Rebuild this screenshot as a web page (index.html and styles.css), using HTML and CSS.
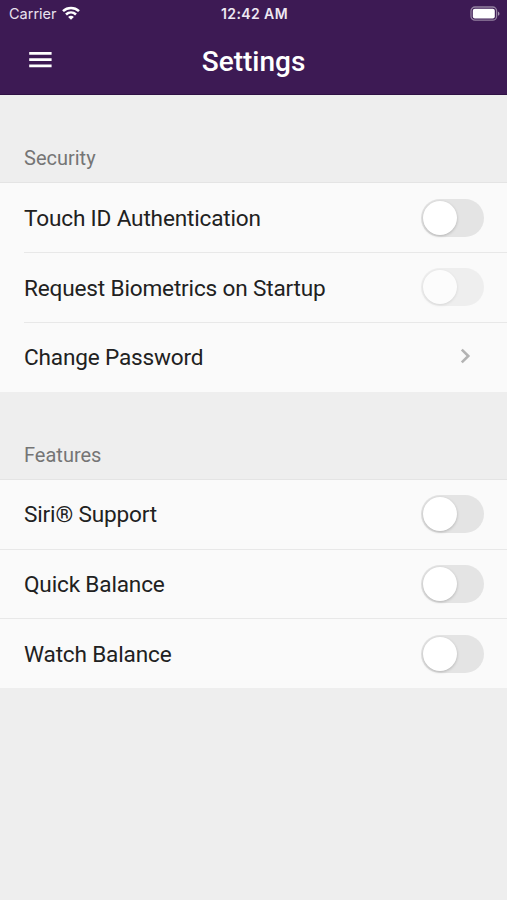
FILE: index.html
```html
<!DOCTYPE html>
<html lang="en">
<head>
<meta charset="utf-8">
<title>Settings</title>
<link rel="stylesheet" href="styles.css">
</head>
<body>
<header class="header">
  <div class="status">
    <div class="carrier"><span>Carrier</span>
      <svg class="wifi" width="18" height="14" viewBox="0 0 18 14" fill="none" stroke="#fff" stroke-width="2.6"><path d="M1 5.1C5.6.9 12.4.9 17 5.1M4 8.5c2.9-2.7 7.1-2.7 10 0"/><path d="M6.1 10.9c1.7-1.6 4.1-1.6 5.8 0L9 13.8z" fill="#fff" stroke="none"/></svg>
    </div>
    <span class="time">12:42 AM</span>
    <svg class="battery" width="30" height="16" viewBox="0 0 30 16"><rect x="1" y="1" width="25.6" height="13.2" rx="4" fill="none" stroke="#fff" stroke-opacity=".45" stroke-width="1.3"/><rect x="2.8" y="2.8" width="22" height="9.6" rx="2" fill="#fff"/><path d="M28 5.4c2 .8 2 3.6 0 4.4z" fill="#fff" fill-opacity=".55"/></svg>
  </div>
  <div class="toolbar">
    <svg class="menu" width="24" height="18" viewBox="0 0 24 18" fill="#fff"><path d="M1.2 1h22.4v2.8H1.2zM1.2 7.2h22.4V10H1.2zM1.2 13.4h22.4v2.8H1.2z"/></svg>
    <h1 class="title">Settings</h1>
  </div>
</header>
<main>
  <h2 class="section">Security</h2>
  <ul class="list inset">
    <li class="row"><span class="label">Touch ID Authentication</span><span class="switch"><span class="knob"></span></span></li>
    <li class="row"><span class="label">Request Biometrics on Startup</span><span class="switch disabled"><span class="knob"></span></span></li>
    <li class="row"><span class="label">Change Password</span><svg class="chevron" width="11" height="16" viewBox="0 0 11 16" fill="none" stroke="#b3b3b3" stroke-width="2.6"><path d="M1.8 1.6 8.3 8l-6.5 6.4"/></svg></li>
  </ul>
  <h2 class="section">Features</h2>
  <ul class="list">
    <li class="row"><span class="label">Siri® Support</span><span class="switch"><span class="knob"></span></span></li>
    <li class="row"><span class="label">Quick Balance</span><span class="switch"><span class="knob"></span></span></li>
    <li class="row"><span class="label">Watch Balance</span><span class="switch"><span class="knob"></span></span></li>
  </ul>
</main>
</body>
</html>
```
FILE: styles.css
```css
* { box-sizing: border-box; }
body {
  margin: 0;
  min-height: 900px;
  background: #eee;
  font-family: Roboto, "Liberation Sans", sans-serif;
  color: #212121;
}
.header {
  height: 95px;
  background: #3d1a54;
  border-bottom: 1px solid #2f1144;
  color: #fff;
}
.status {
  height: 28px;
  display: grid;
  grid-template-columns: 1fr auto 1fr;
  align-items: center;
  padding: 0 7px 0 9px;
  font: 14.5px/28px Inter, sans-serif;
}
.carrier { display: flex; align-items: center; gap: 5px; color: #e9e2ee; }
.wifi { display: block; margin-top: -2px; }
.time { font-weight: 600; font-size: 14px; color: #eee8f2; letter-spacing: .4px; }
.battery { justify-self: end; margin-top: -1px; }
.toolbar {
  height: 66px;
  display: grid;
  grid-template-columns: 1fr auto 1fr;
  align-items: center;
}
.menu { margin: -3px 0 0 28px; }
.title { margin: 1px 0 0; font-size: 28px; line-height: 34px; font-weight: 500; }
.section {
  height: 87px;
  margin: 0;
  padding: 50px 24px 0;
  font-size: 20px;
  line-height: 26px;
  font-weight: 400;
  color: #757575;
}
.list { margin: 0; padding: 0; list-style: none; background: #fafafa; border-top: 1px solid #e4e4e4; }
.row {
  height: 69.6px;
  display: flex;
  align-items: center;
  justify-content: space-between;
  padding: 0 23px 0 24px;
}
.row:first-child { height: 69px; }
.row:last-child { height: 70px; }
.row + .row { border-top: 1px solid #e8e8e8; }
.inset .row { margin-left: 24px; padding-left: 0; }
.label { margin-top: 2.5px; font-size: 22.6px; line-height: 30px; letter-spacing: -.17px; }
.inset .row:last-child .label { margin-top: 1px; }
.switch {
  width: 63px;
  height: 38px;
  border-radius: 19px;
  padding: 2px;
  background: #e4e4e4;
}
.knob {
  display: block;
  width: 34px;
  height: 34px;
  border-radius: 50%;
  background: #fff;
  box-shadow: 0 1px 3px rgba(0, 0, 0, .22);
}
.disabled { opacity: .5; }
.chevron { margin: -2px 13px 0 0; }
```
